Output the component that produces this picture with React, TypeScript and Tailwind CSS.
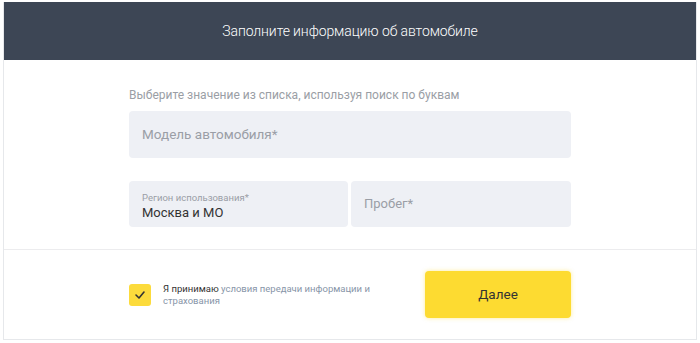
export default function App() {
  return (
    <main className="min-h-[343px] bg-white px-[3px] pt-[2px] font-['Roboto',sans-serif]">
      <div className="flex h-[338px] flex-col border-x border-b border-[#e6e8eb] bg-white">
        <header className="flex h-[58px] items-center justify-center bg-[#3d4655]">
          <h1 className="text-[14px] font-light tracking-[-0.1px] text-white">
            Заполните информацию об автомобиле
          </h1>
        </header>

        <section className="flex h-[190px] flex-col items-center border-b border-[#ececee]">
          <div className="flex w-[442px] flex-col">
            <p className="mt-[27px] text-[12px] leading-[16px] text-[#9a9ea5]">
              Выберите значение из списка, используя поиск по буквам
            </p>
            <div className="mt-[8px] flex h-[47px] items-center rounded-[4px] bg-[#eef0f5] px-[13px]">
              <span className="text-[13.5px] text-[#9a9ea6]">Модель автомобиля*</span>
            </div>
            <div className="mt-[23px] flex gap-[3px]">
              <div className="flex h-[46px] w-[219px] flex-col rounded-[4px] bg-[#eef0f5] px-[13px] pt-[11px]">
                <span className="text-[9.5px] leading-[12px] text-[#9a9ea6]">Регион использования*</span>
                <span className="text-[13px] leading-[18px] text-[#333]">Москва и МО</span>
              </div>
              <div className="flex h-[46px] flex-1 items-center rounded-[4px] bg-[#eef0f5] px-[13px]">
                <span className="text-[13px] text-[#9a9ea6]">Пробег*</span>
              </div>
            </div>
          </div>
        </section>

        <section className="flex flex-1 items-center justify-center">
          <div className="flex w-[442px] items-center justify-between">
            <div className="flex items-center gap-[12px]">
              <span className="flex h-[22px] w-[22px] items-center justify-center rounded-[3px] bg-[#fcdb3c]">
                <svg width="12" height="10" viewBox="0 0 12 10" fill="none">
                  <path d="M2 5l3 3 5-6" stroke="#333" strokeWidth="1.6" strokeLinecap="round" strokeLinejoin="round" />
                </svg>
              </span>
              <div className="flex flex-col text-[9.5px] leading-[11.5px]">
                <p className="text-[#333]">
                  Я принимаю <span className="text-[#8795a8]">условия передачи информации и</span>
                </p>
                <p className="text-[#8795a8]">страхования</p>
              </div>
            </div>
            <button className="flex h-[47px] w-[146px] items-center justify-center rounded-[4px] bg-[#fddb31] text-[13.5px] text-[#333] shadow-[0_0_4px_rgba(253,219,49,0.5)]">
              Далее
            </button>
          </div>
        </section>
      </div>
    </main>
  );
}
